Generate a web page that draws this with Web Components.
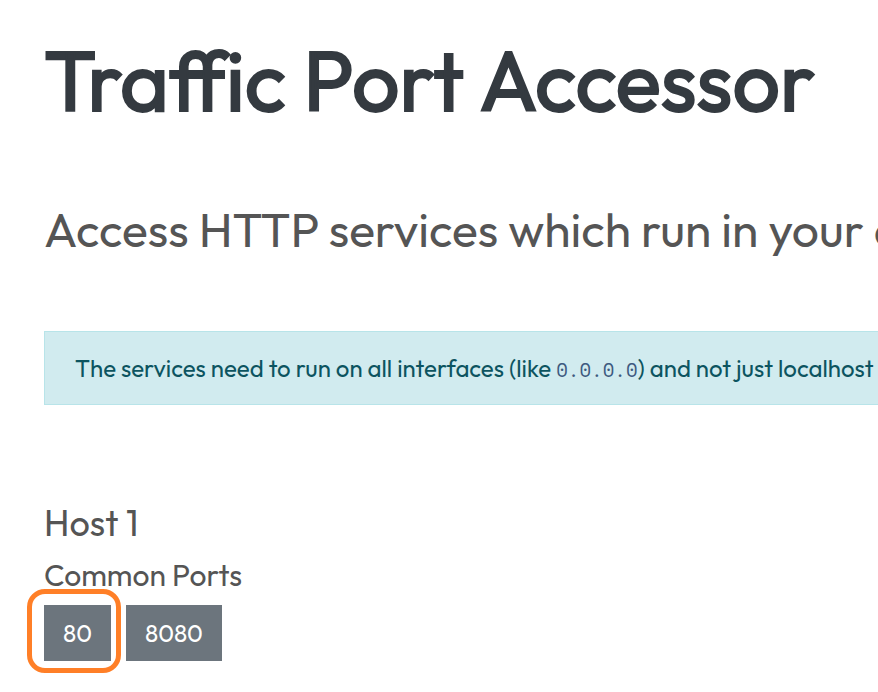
<!DOCTYPE html>
<html lang="en">
<head>
<meta charset="utf-8">
<title>Traffic Port Accessor</title>
<style>
body { margin: 0; background: #fff; color: #555; font-family: Outfit, Lato, "Open Sans", sans-serif; }
</style>
</head>
<body>
<port-accessor></port-accessor>
<script>
const define = (name, html) => customElements.define(name, class extends HTMLElement {
  constructor() {
    super();
    this.attachShadow({ mode: "open" }).innerHTML = html;
  }
});

define("page-header", `
<style>
:host { display: block; white-space: nowrap; }
h1 { margin: 0; color: #343a40; font-size: 84px; line-height: 104px; font-weight: 400; -webkit-text-stroke: 2px #343a40; }
p { margin: 61px 0 0; font-size: 48px; line-height: 72px; overflow: hidden; }
</style>
<h1><slot name="title"></slot></h1>
<p><slot></slot></p>`);

define("info-alert", `
<style>
:host { display: block; padding: 18px 0 18px 30px; border: 1px solid #b8e4e9; border-right: 0; background: #d1ebef; color: #0c5460; font-size: 24px; line-height: 36px; white-space: nowrap; overflow: hidden; }
</style>
<div role="note"><slot></slot></div>`);

define("port-button", `
<style>
:host { display: block; position: relative; }
button { display: block; margin: 0; padding: 10px 19px; border: 0; background: #6c757d; color: #fff; font: inherit; font-size: 24px; line-height: 36px; }
:host([marked])::after { content: ""; position: absolute; inset: -16px -10px -12px -17px; border: 5px solid #ff7f27; border-radius: 18px; pointer-events: none; }
</style>
<button type="button"><slot></slot></button>`);

define("host-ports", `
<style>
:host { display: block; }
h2 { margin: 0; font-size: 36px; line-height: 44px; font-weight: 400; }
h3 { margin: 12px 0; font-size: 30px; line-height: 36px; font-weight: 400; }
.ports { display: flex; gap: 15px; }
</style>
<h2><slot name="host"></slot></h2>
<h3>Common Ports</h3>
<div class="ports"><slot></slot></div>`);

define("port-accessor", `
<style>
:host { display: block; padding: 28px 0 24px 44px; }
info-alert { margin-top: 66px; }
host-ports { margin-top: 96px; }
code { color: #3d5a80; font: 19px "Space Mono", "Roboto Mono", "JetBrains Mono", "DejaVu Sans Mono", monospace; line-height: 1; }
</style>
<main>
<page-header><span slot="title">Traffic Port Accessor</span>Access HTTP services which run in your e</page-header>
<info-alert>The services need to run on all interfaces (like <code>0.0.0.0</code>) and not just localhost</info-alert>
<host-ports><span slot="host">Host 1</span><port-button marked>80</port-button><port-button>8080</port-button></host-ports>
</main>`);
</script>
</body>
</html>
